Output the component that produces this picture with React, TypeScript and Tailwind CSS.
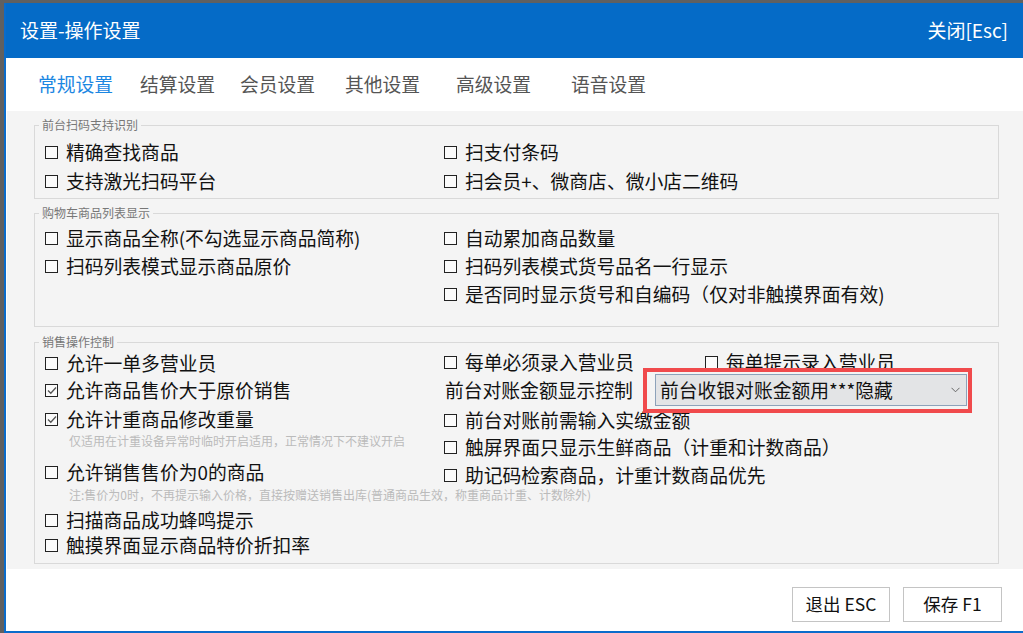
import React from "react";

// 设置-操作设置 dialog (POS settings)

const FONT = {
  fontFamily: '"Noto Sans CJK SC", "Microsoft YaHei", "Noto Sans", sans-serif',
};

const tabs = [
  { label: "常规设置", w: "w-[102px]", active: true },
  { label: "结算设置", w: "w-[100px]", active: false },
  { label: "会员设置", w: "w-[105px]", active: false },
  { label: "其他设置", w: "w-[111px]", active: false },
  { label: "高级设置", w: "w-[115px]", active: false },
  { label: "语音设置", w: "w-[100px]", active: false },
];

function Box({ checked }: { checked?: boolean }) {
  return (
    <span className="w-[13px] h-[13px] shrink-0 border border-[#222] bg-[#fbfbfb] flex items-center justify-center">
      {checked && (
        <svg width="10" height="9" viewBox="0 0 10 9">
          <path d="M1 4.5 L3.8 7.2 L9 1.5" fill="none" stroke="#555" strokeWidth="1.3" />
        </svg>
      )}
    </span>
  );
}

function Check({
  label,
  checked,
  h = "h-[28px]",
}: {
  label: string;
  checked?: boolean;
  h?: string;
}) {
  return (
    <div className={`flex items-center gap-[8px] ${h}`}>
      <Box checked={checked} />
      <span className="text-[18.8px] leading-none text-[#111] whitespace-nowrap">{label}</span>
    </div>
  );
}

function Group({
  title,
  className,
  children,
}: {
  title: string;
  className: string;
  children: React.ReactNode;
}) {
  return (
    <fieldset className={`ml-[27px] w-[965px] border border-[#d9d9d9] ${className}`}>
      <legend className="ml-[4px] px-[3px] text-[12px] leading-[16px] text-[#777]">{title}</legend>
      {children}
    </fieldset>
  );
}

export default function App() {
  return (
    <div className="w-[1023px] h-[633px] bg-[#606060] pt-[3px] pl-[4px] overflow-hidden" style={FONT}>
      <div className="h-[630px] flex flex-col border-l-2 border-b-2 border-[#0a6ccb] bg-white">
        {/* Title bar */}
        <div className="h-[55px] shrink-0 bg-[#056bc7] flex items-center justify-between pl-[14px] pr-[15px] text-white">
          <span className="text-[19px]">设置-操作设置</span>
          <span className="text-[19px]">关闭[Esc]</span>
        </div>

        {/* Tabs */}
        <div className="h-[53px] shrink-0 flex items-center pl-[32px]">
          {tabs.map((t) => (
            <span
              key={t.label}
              className={`${t.w} text-[18.8px] ${t.active ? "text-[#1c87e2]" : "text-[#555]"}`}
            >
              {t.label}
            </span>
          ))}
        </div>

        {/* Content */}
        <div className="ml-[1px] h-[458px] shrink-0 bg-[#f4f4f4] pt-[6px]">
          <Group title="前台扫码支持识别" className="">
            <div className="pt-[5px] pb-[2px] pl-[10px] flex">
              <div className="w-[399px]">
                <Check label="精确查找商品" h="h-[29px]" />
                <Check label="支持激光扫码平台" h="h-[29px]" />
              </div>
              <div>
                <Check label="扫支付条码" h="h-[29px]" />
                <Check label="扫会员+、微商店、微小店二维码" h="h-[29px]" />
              </div>
            </div>
          </Group>

          <Group title="购物车商品列表显示" className="mt-[6px]">
            <div className="pt-[3px] pb-[18px] pl-[10px] flex">
              <div className="w-[399px]">
                <Check label="显示商品全称(不勾选显示商品简称)" />
                <Check label="扫码列表模式显示商品原价" />
              </div>
              <div>
                <Check label="自动累加商品数量" />
                <Check label="扫码列表模式货号品名一行显示" />
                <Check label="是否同时显示货号和自编码（仅对非触摸界面有效)" />
              </div>
            </div>
          </Group>

          <Group title="销售操作控制" className="mt-[7px]">
            <div className="pb-[5px] pl-[10px] flex">
              <div className="w-[399px]">
                <Check label="允许一单多营业员" h="h-[27px]" />
                <Check label="允许商品售价大于原价销售" checked h="h-[27px]" />
                <Check label="允许计重商品修改重量" checked h="h-[30px]" />
                <div className="h-[14px] pl-[24px] text-[12px] leading-[14px] text-[#bbb] whitespace-nowrap">
                  仅适用在计重设备异常时临时开启适用，正常情况下不建议开启
                </div>
                <div className="mt-[10px]">
                  <Check label="允许销售售价为0的商品" />
                </div>
                <div className="h-[18px] flex items-center pl-[24px] text-[12px] leading-none text-[#bbb] whitespace-nowrap">
                  注:售价为0时，不再提示输入价格，直接按赠送销售出库(普通商品生效，称重商品计重、计数除外)
                </div>
                <div className="mt-[3px]">
                  <Check label="扫描商品成功蜂鸣提示" h="h-[26px]" />
                </div>
                <Check label="触摸界面显示商品特价折扣率" h="h-[25px]" />
              </div>

              <div>
                <div className="flex h-[24px]">
                  <div className="w-[261px]">
                    <Check label="每单必须录入营业员" h="h-[24px]" />
                  </div>
                  <Check label="每单提示录入营业员" h="h-[24px]" />
                </div>
                <div className="flex items-center h-[32px]">
                  <span className="w-[211px] pl-[1px] text-[18.8px] leading-none text-[#111]">
                    前台对账金额显示控制
                  </span>
                  <div className="relative">
                    <div className="w-[312px] h-[32px] bg-[#e3e4e6] border border-[#8da2ba] flex items-center justify-between pl-[4px] pr-[6px]">
                      <span className="text-[18.8px] leading-none text-[#111]">前台收银对账金额用***隐藏</span>
                      <svg width="9" height="6" viewBox="0 0 9 6">
                        <path d="M0.5 0.8 L4.5 4.8 L8.5 0.8" fill="none" stroke="#666" strokeWidth="1" />
                      </svg>
                    </div>
                    {/* red annotation frame */}
                    <span className="absolute -left-[12px] -right-[5px] -top-[6px] -bottom-[7px] border-[4px] border-[#f04a4c] pointer-events-none" />
                  </div>
                </div>
                <Check label="前台对账前需输入实缴金额" />
                <Check label="触屏界面只显示生鲜商品（计重和计数商品）" h="h-[27px]" />
                <Check label="助记码检索商品，计重计数商品优先" />
              </div>
            </div>
          </Group>
        </div>

        {/* Footer */}
        <div className="flex-1 flex items-start justify-end gap-[13px] pt-[18px] pr-[21px]">
          <button className="w-[98px] h-[35px] border border-[#c4c4c4] bg-white text-[17.5px] text-[#111]">
            退出 ESC
          </button>
          <button className="w-[99px] h-[35px] border border-[#c4c4c4] bg-white text-[17.5px] text-[#111]">
            保存 F1
          </button>
        </div>
      </div>
    </div>
  );
}
